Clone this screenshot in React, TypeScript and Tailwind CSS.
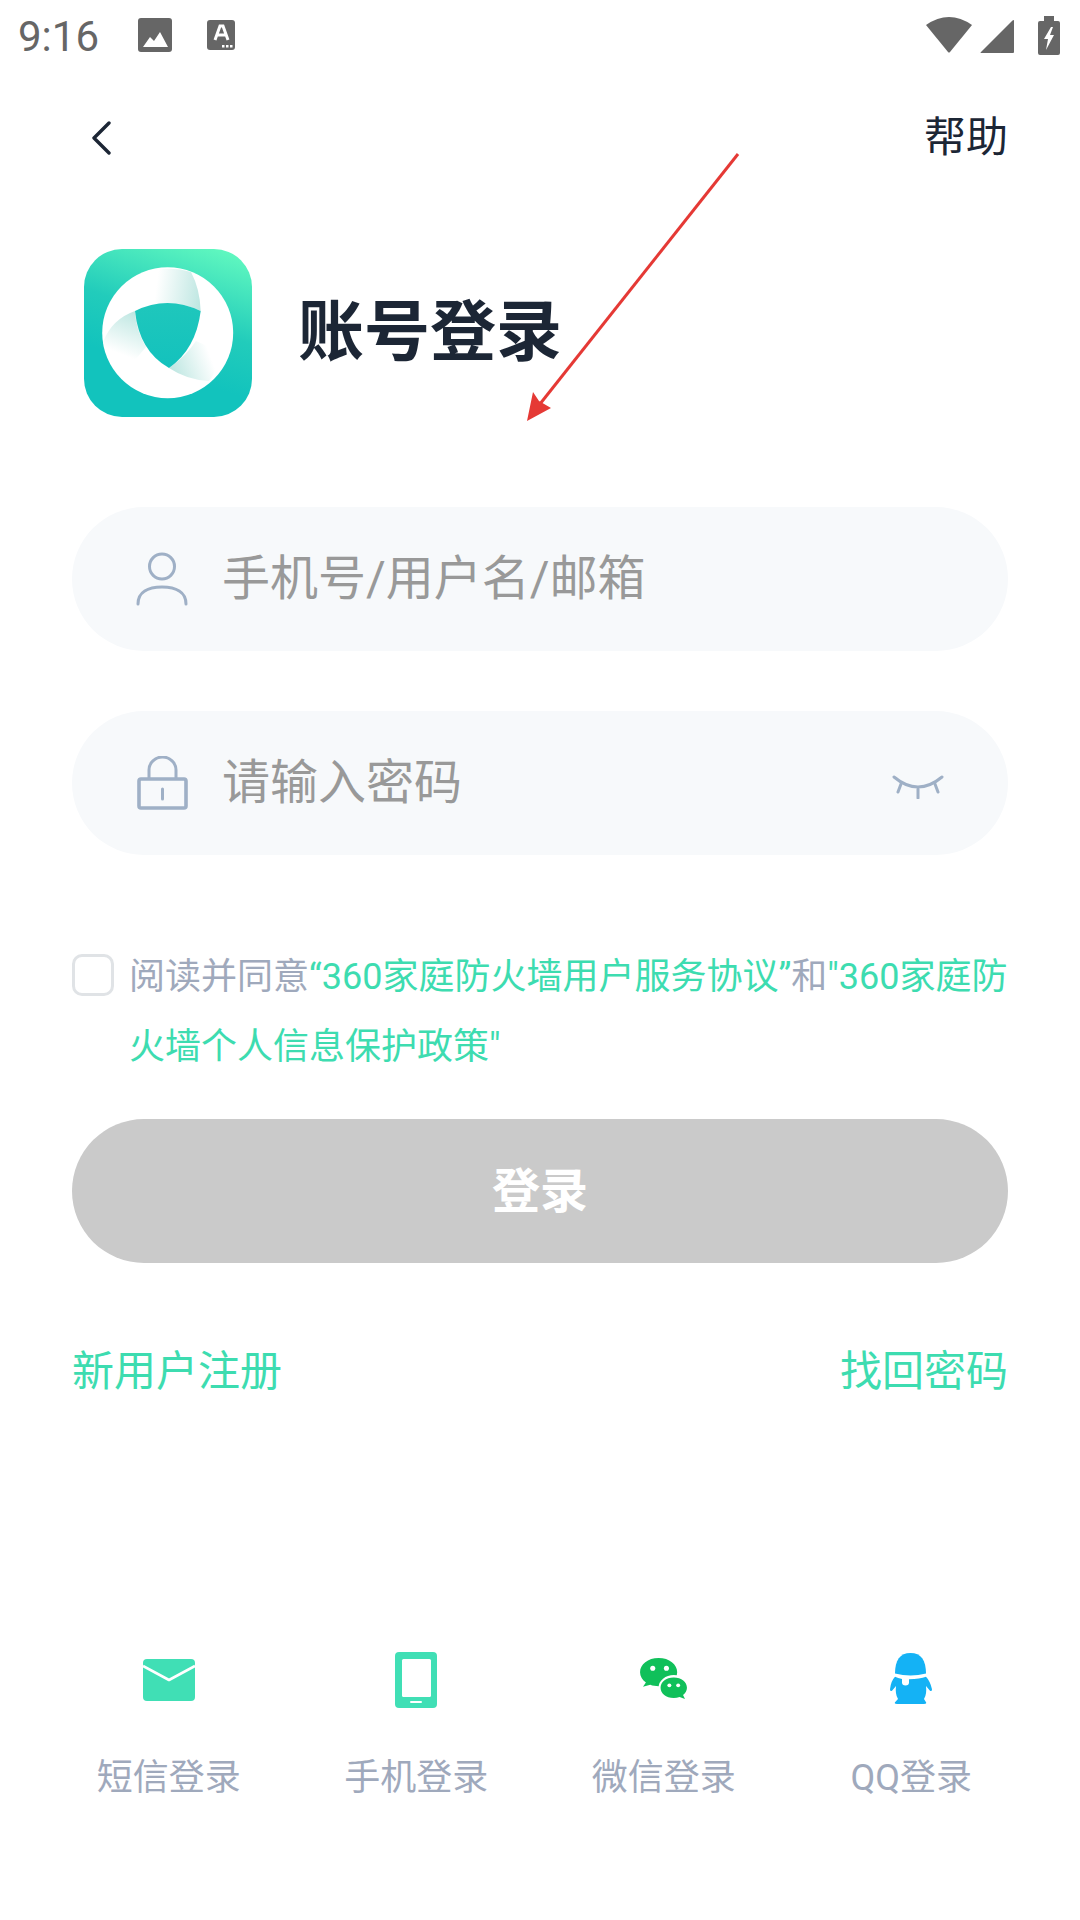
import React from "react";

const StatusBar = () => {
  return (
    <div className="flex h-[70px] items-center justify-between pl-[18px] pr-[20px]">
      <div className="flex items-center">
        <span className="mt-[4px] w-[120px] text-[42px] leading-none text-[#666666]">9:16</span>
        <svg width="34" height="34" viewBox="0 0 34 34">
          <rect width="34" height="34" rx="3" fill="#666666" />
          <path d="M5 29 L12 19 L16 23 L22 14 L30 29 Z" fill="#ffffff" />
        </svg>
        <svg className="ml-[35px]" width="28" height="30" viewBox="0 0 28 30">
          <rect width="28" height="30" rx="3" fill="#666666" />
          <path d="M8 20 L13 6 L16 6 L21 20 M10 15 H19" fill="none" stroke="#ffffff" strokeWidth="3" />
          <path d="M15 25h2.5v2.5H15z M19 25h2.5v2.5H19z M23 25h2.5v2.5H23z" fill="#ffffff" />
        </svg>
      </div>
      <div className="flex items-center">
        <svg width="46" height="36" viewBox="0 0 46 36">
          <path d="M0 8 Q23 -8 46 8 L24 35 Q23 36 22 35 Z" fill="#666666" />
        </svg>
        <svg className="ml-[8px] mt-[3px]" width="34" height="33" viewBox="0 0 34 33">
          <path d="M34 1 V32 Q34 33 33 33 H1 Q0 33 1 32 L32 1 Q34 -1 34 1 Z" fill="#666666" />
        </svg>
        <svg className="ml-[24px]" width="22" height="39" viewBox="0 0 22 39">
          <path d="M6 0 H16 V5 H20 Q22 5 22 7 V37 Q22 39 20 39 H2 Q0 39 0 37 V7 Q0 5 2 5 H6 Z" fill="#666666" />
          <path d="M13 11 L6 23 H10 L8 34 L16 19 H12 L15 11 Z" fill="#ffffff" />
        </svg>
      </div>
    </div>
  );
};

const Logo = () => {
  return (
    <svg width="168" height="168" viewBox="0 0 168 168" className="shrink-0">
      <defs>
        <linearGradient id="bg" x1="0.8" y1="0" x2="0.55" y2="0.75">
          <stop offset="0" stopColor="#5ff7bf" />
          <stop offset="0.6" stopColor="#22ccbb" />
          <stop offset="1" stopColor="#12c3bd" />
        </linearGradient>
        <linearGradient id="shield" x1="0.5" y1="0" x2="0.5" y2="1">
          <stop offset="0" stopColor="#1fc7bc" />
          <stop offset="1" stopColor="#13c2bd" />
        </linearGradient>
        <linearGradient id="bandTop" gradientUnits="userSpaceOnUse" x1="72" y1="40" x2="117" y2="46">
          <stop offset="0" stopColor="#ffffff" />
          <stop offset="1" stopColor="#bfe7e2" />
        </linearGradient>
        <linearGradient id="bandLeft" gradientUnits="userSpaceOnUse" x1="50" y1="63" x2="34" y2="104">
          <stop offset="0" stopColor="#bfe7e2" />
          <stop offset="1" stopColor="#ffffff" />
        </linearGradient>
        <linearGradient id="bandRight" gradientUnits="userSpaceOnUse" x1="88" y1="120" x2="126" y2="106">
          <stop offset="0" stopColor="#bfe7e2" />
          <stop offset="1" stopColor="#ffffff" />
        </linearGradient>
      </defs>
      <rect width="168" height="168" rx="38" fill="url(#bg)" />
      <circle cx="83.7" cy="83.7" r="65.5" fill="#ffffff" />
      <path d="M60 24 Q85 16 107 23 Q116 40 116.7 62 Q92 50 60 58 Z" fill="url(#bandTop)" />
      <path d="M51 62 Q28 70 19 93 Q24 112 40 124 L62 98 Q52 82 51 62 Z" fill="url(#bandLeft)" />
      <path d="M85 119 Q103 131 125 132 Q135 122 130 100 L112 92 Q102 107 85 119 Z" fill="url(#bandRight)" />
      <path d="M51 62 Q83 46 116.7 62 Q112 100 85 119 Q55 102 51 62 Z" fill="url(#shield)" />
    </svg>
  );
};

const App = () => {
  return (
    <div
      className="relative h-[1920px] w-[1080px] overflow-hidden bg-white"
      style={{ fontFamily: 'Roboto, "Noto Sans CJK SC", sans-serif' }}
    >
      <StatusBar />

      {/* nav */}
      <div className="flex h-[136px] items-center justify-between pl-[91px] pr-[72px]">
        <svg width="20" height="34" viewBox="0 0 20 34">
          <path d="M18 2 L3 17 L18 32" fill="none" stroke="#1c2635" strokeWidth="3.4" strokeLinecap="round" strokeLinejoin="round" />
        </svg>
        <span className="text-[42px] leading-none text-[#1c2635]">帮助</span>
      </div>

      <div className="mt-[43px] flex items-center gap-[46px] pl-[84px]">
        <Logo />
        <h1 className="text-[66px] font-bold leading-none text-[#1c2635]">账号登录</h1>
      </div>

      <div className="mx-[72px] mt-[90px]">
        <div className="flex h-[144px] items-center rounded-full bg-[#f7f9fb] pl-[64px]">
          <svg width="52" height="54" viewBox="0 0 52 54">
            <circle cx="26" cy="14.5" r="12.5" fill="none" stroke="#9fb0c6" strokeWidth="3" />
            <path d="M2 52 C2 40 12 35 26 35 C40 35 50 40 50 52" fill="none" stroke="#9fb0c6" strokeWidth="3" strokeLinecap="round" />
          </svg>
          <span className="ml-[34px] text-[48px] leading-none text-[#999999]">手机号/用户名/邮箱</span>
        </div>

        <div className="mt-[60px] flex h-[144px] items-center rounded-full bg-[#f7f9fb] pl-[64px] pr-[64px]">
          <svg width="52" height="54" viewBox="0 0 52 54">
            <rect x="3" y="23" width="47" height="29" rx="2" fill="none" stroke="#9fb0c6" strokeWidth="3.6" />
            <path d="M13 23 V14 A13.5 13 0 0 1 40 14 V23" fill="none" stroke="#9fb0c6" strokeWidth="3" />
            <path d="M26.5 33 V43" stroke="#9fb0c6" strokeWidth="3" strokeLinecap="round" />
          </svg>
          <span className="ml-[34px] text-[48px] leading-none text-[#999999]">请输入密码</span>
          <svg className="ml-auto mt-[8px]" width="52" height="24" viewBox="0 0 52 24">
            <path d="M2 2 Q26 22 50 2" fill="none" stroke="#9fb0c6" strokeWidth="3" strokeLinecap="round" />
            <path d="M9 9 L6 17 M26 14 V23 M43 9 L46 17" fill="none" stroke="#9fb0c6" strokeWidth="3" strokeLinecap="round" />
          </svg>
        </div>

        <div className="mt-[85px] flex items-start">
          <div className="mt-[14px] h-[42px] w-[42px] shrink-0 rounded-[10px] border-[3px] border-[#e0e3e6]" />
          <p className="ml-[15px] pt-[2px] text-[36px] leading-[70px] text-[#9fa9bc] whitespace-nowrap">
            阅读并同意
            <span className="text-[#3ddcb0]">“360家庭防火墙用户服务协议”</span>和
            <span className="text-[#3ddcb0]">
              "360家庭防
              <br />
              火墙个人信息保护政策"
            </span>
          </p>
        </div>

        <button className="mt-[37px] flex h-[144px] w-full items-center justify-center rounded-full bg-[#cacaca] pt-[2px] text-[48px] font-bold text-white">
          登录
        </button>

        <div className="mt-[78px] flex h-[60px] items-center justify-between text-[42px] text-[#3ddcb0]">
          <span>新用户注册</span>
          <span>找回密码</span>
        </div>
      </div>

      {/* other logins */}
      <div className="mt-[249px] grid grid-cols-4 px-[45px] text-[36px] text-[#9fa9bc]">
        <div className="flex flex-col items-center">
          <div className="flex h-[60px] items-center">
            <svg width="52" height="42" viewBox="0 0 52 42">
              <rect width="52" height="42" rx="4" fill="#40dfb5" />
              <path d="M0 7 L26 21 L52 7" fill="none" stroke="#ffffff" strokeWidth="2.6" strokeLinejoin="round" />
            </svg>
          </div>
          <span className="mt-[43px] leading-[50px]">短信登录</span>
        </div>
        <div className="flex flex-col items-center">
          <div className="flex h-[60px] items-center">
            <svg width="42" height="56" viewBox="0 0 42 56">
              <rect width="42" height="56" rx="4" fill="#40dfb5" />
              <rect x="7" y="7" width="29" height="38" rx="1.5" fill="#ffffff" />
              <rect x="15" y="49" width="12" height="2" rx="1" fill="#ffffff" />
            </svg>
          </div>
          <span className="mt-[43px] leading-[50px]">手机登录</span>
        </div>
        <div className="flex flex-col items-center">
          <div className="flex h-[60px] items-center">
            <svg className="mb-[4px]" width="47" height="43" viewBox="9 11 48 44">
              <path d="M28 12 C17 12 9 18.5 9 26.5 C9 31 11.5 34.5 15 37 L12 41.5 L19.5 39.5 C22 40.5 25 41 28 41 C39 41 47 34.5 47 26.5 C47 18.5 39 12 28 12 Z" fill="#10c05a" />
              <ellipse cx="43.5" cy="42" rx="15.5" ry="12.5" fill="#ffffff" />
              <path d="M43.5 32 C35.5 32 30 36.5 30 42.5 C30 48.5 35.5 53 43.5 53 C45.5 53 47.5 52.7 49.5 52 L55 54 L53 50 C55.5 48 57 45.5 57 42.5 C57 36.5 51.5 32 43.5 32 Z" fill="#10c05a" />
              <circle cx="22" cy="22.5" r="2.6" fill="#ffffff" />
              <circle cx="36" cy="22.5" r="2.6" fill="#ffffff" />
              <circle cx="39" cy="40" r="2" fill="#ffffff" />
              <circle cx="48" cy="40" r="2" fill="#ffffff" />
            </svg>
          </div>
          <span className="mt-[43px] leading-[50px]">微信登录</span>
        </div>
        <div className="flex flex-col items-center">
          <div className="flex h-[60px] items-center">
            <svg className="mb-[4px]" width="42" height="51" viewBox="10 6 42 62" preserveAspectRatio="none">
              <path d="M15 31 C15 15 20 6 30.5 6 C41 6 46 15 46 31 Q30.5 36 15 31 Z" fill="#14b2f5" />
              <path d="M15 35 Q18 37 22 37.5 L22 42 A3.5 3.5 0 0 0 29 42 L29 38 Q40 38 46 35 Q50 40 52 50 Q52 53 50 52 L46 46 Q47 56 44 62 L46 66 Q47 68 44 68 L17 68 Q14 68 15 66 L18 62 Q15 56 16 46 L12 52 Q10 53 10 50 Q11 40 15 35 Z" fill="#14b2f5" />
            </svg>
          </div>
          <span className="mt-[43px] leading-[50px]">QQ登录</span>
        </div>
      </div>

      {/* red annotation arrow */}
      <svg className="absolute left-0 top-0" width="1080" height="500" viewBox="0 0 1080 500">
        <path d="M738 154 L536 409" stroke="#e53935" strokeWidth="3" fill="none" />
        <path d="M527 421 L533 392 L539 401 L551 408 Z" fill="#e53935" />
      </svg>
    </div>
  );
};

export default App;
